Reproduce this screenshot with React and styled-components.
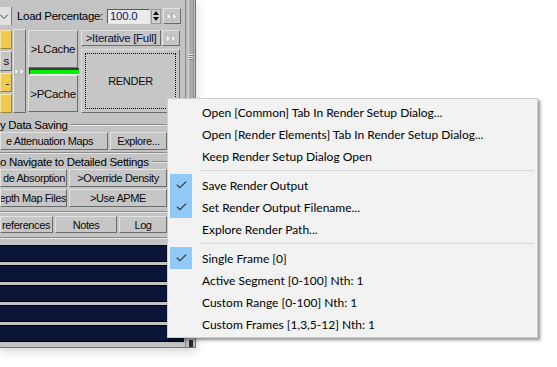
import React from "react";
import styled, { createGlobalStyle } from "styled-components";

const GlobalStyle = createGlobalStyle`
  html, body {
    margin: 0;
    padding: 0;
    background: #fff;
  }
  body {
    font-family: "Liberation Sans", Arial, sans-serif;
  }
`;

const Page = styled.div`
  position: relative;
  width: 557px;
  height: 367px;
  overflow: hidden;
  background: #fff;
`;

const Window = styled.div`
  display: flex;
  width: 195px;
  height: 347px;
  background: #c3c3c3;
  border-right: 1px solid #2b88d8;
  border-bottom: 1px solid #2b88d8;
  box-shadow: 0 3px 10px rgba(0, 0, 0, 0.18);
  font: 11px "Liberation Sans", Arial, sans-serif;
  letter-spacing: -0.3px;
  color: #000;
`;

const Content = styled.div`
  width: 185px;
  display: flex;
  flex-direction: column;
  overflow: hidden;
`;

const ScrollTrack = styled.div`
  width: 9px;
  margin-left: 1px;
  border-left: 1px solid #8c8c8c;
  background: #bdbdbd;
  display: flex;
  flex-direction: column;
  justify-content: space-between;
`;

const Thumb = styled.div`
  margin: 0 1px 0 2px;
  height: 110px;
  background: #ababab;
  border-left: 1px solid #d4d4d4;
  border-right: 1px solid #8e8e8e;
  display: flex;
  align-items: flex-end;
  justify-content: center;
  padding-bottom: 50px;
  box-sizing: border-box;
`;

const Grip = styled.div`
  width: 4px;
  height: 6px;
  background: repeating-linear-gradient(#efefef 0 1px, #7a7a7a 1px 2px);
`;

const ScrollEnd = styled.div`
  height: 7px;
  margin: 0 2px 0 3px;
  background: #2a2a2a;
`;

const TopRow = styled.div`
  height: 26px;
  padding-top: 3px;
  display: flex;
  align-items: center;
`;

const Dropdown = styled.div`
  width: 11px;
  height: 18px;
  background: #e1e1e1;
  border-right: 1px solid #7a7a7a;
  display: flex;
  align-items: center;
`;

const Label = styled.span`
  margin: 0 4px 0 5px;
  font-size: 11.5px;
  white-space: nowrap;
`;

const NumberInput = styled.div`
  width: 39px;
  height: 13px;
  border: 1px solid;
  border-color: #5a5a5a #e8e8e8 #e8e8e8 #5a5a5a;
  background: #ebebeb;
  color: #121270;
  font-size: 11.5px;
  line-height: 13px;
  padding-left: 2px;
  box-sizing: content-box;
`;

const Spinner = styled.div`
  width: 10px;
  height: 15px;
  margin-left: 1px;
  background: #d0d0d0;
  border: 1px solid #9a9a9a;
  box-sizing: border-box;
  display: flex;
  flex-direction: column;
  align-items: center;
  justify-content: space-around;
`;

const Bevel = styled.div`
  box-sizing: border-box;
  background: #c6c6c6;
  border: 1px solid;
  border-color: #e2e2e2 #6c6c6c #6c6c6c #e2e2e2;
  display: flex;
  align-items: center;
  justify-content: center;
  white-space: nowrap;
  overflow: hidden;
  color: #0a0a0a;
`;

const ArrowButton = styled(Bevel)`
  width: 18px;
  height: 16px;
  margin-left: ${(p) => p.$gap || 0}px;
`;

const MainRow = styled.div`
  height: 84px;
  display: flex;
`;

const SwatchColumn = styled.div`
  width: 12px;
  padding-top: 1px;
  display: flex;
  flex-direction: column;
  gap: 2px;
`;

const Swatch = styled(Bevel)`
  height: ${(p) => p.$h}px;
  background: ${(p) => (p.$yellow ? "#f1ca52" : "#c6c6c6")};
  border-color: ${(p) => (p.$yellow ? "#f7e6a4 #9c8440 #9c8440 #f7e6a4" : "#e2e2e2 #6c6c6c #6c6c6c #e2e2e2")};
  justify-content: flex-end;
  padding-right: 2px;
  font-size: 11.5px;
`;

const ArrowStrip = styled(Bevel)`
  width: 13px;
  height: 84px;
  margin-left: 1px;
  background: #c0c0c0;
`;

const CacheColumn = styled.div`
  width: 51px;
  margin-left: 2px;
  padding-top: 1px;
  display: flex;
  flex-direction: column;
`;

const CacheButton = styled(Bevel)`
  width: 50px;
  height: ${(p) => p.$h}px;
  font-size: 11.5px;
`;

const Progress = styled.div`
  height: 7px;
  margin-left: 1px;
  box-sizing: border-box;
  background: #00f000;
  border-top: 2px solid #3a3a3a;
  border-left: 1px solid #3a3a3a;
  border-bottom: 1px solid #f4f4f4;
`;

const RenderColumn = styled.div`
  width: 99px;
  margin-left: 2px;
  padding-top: 1px;
  display: flex;
  flex-direction: column;
  gap: 3px;
`;

const SplitRow = styled.div`
  display: flex;
  gap: 1px;
`;

const WideButton = styled(Bevel)`
  flex: 1;
  height: 16px;
  font-size: 11.5px;
  color: #10103a;
`;

const RenderButton = styled(Bevel)`
  height: 64px;
  padding: 3px;
`;

const FocusRect = styled.div`
  flex: 1;
  align-self: stretch;
  border: 1px dotted #000;
  display: flex;
  align-items: center;
  justify-content: center;
  font-size: 11px;
`;

const GroupHead = styled.div`
  height: 14px;
  margin-top: ${(p) => p.$top || 0}px;
  display: flex;
  align-items: center;
  gap: 3px;
  font-size: 11.5px;
  white-space: nowrap;

  &::after {
    content: "";
    flex: 1;
    height: 0;
    border-top: 1px solid #8a8a8a;
    border-bottom: 1px solid #e6e6e6;
  }
`;

const GroupRule = styled.div`
  margin-top: ${(p) => p.$top || 0}px;
  border-top: 1px solid #8a8a8a;
  border-bottom: 1px solid #e6e6e6;
`;

const ButtonRow = styled.div`
  display: flex;
  gap: 2px;
  height: ${(p) => p.$h}px;
  margin-top: ${(p) => p.$top || 0}px;
  width: 167px;
`;

const RowButton = styled(Bevel)`
  width: ${(p) => p.$w}px;
  flex: ${(p) => (p.$w ? "none" : 1)};
  font-size: 11px;
  letter-spacing: -0.4px;
  justify-content: ${(p) => (p.$pad != null ? "flex-end" : "center")};
  padding-right: ${(p) => p.$pad || 0}px;
`;

const List = styled.div`
  margin-top: 5px;
  display: flex;
  flex-direction: column;
  gap: 3px;
  padding-top: 1px;
`;

const ListBar = styled.div`
  height: 15px;
  background: #0b1537;
  border-top: 1px solid #000;
  border-bottom: 1px solid #000;
`;

const Menu = styled.div`
  position: absolute;
  left: 167px;
  top: 98px;
  width: 371px;
  box-sizing: border-box;
  padding: 2px;
  background: #f2f2f2;
  border: 1px solid #cfcfcf;
  box-shadow: 2px 2px 2px rgba(0, 0, 0, 0.3), 3px 3px 4px rgba(0, 0, 0, 0.15);
  font: 12px Lato, "Noto Sans", sans-serif;
  color: #000;
`;

const Item = styled.div`
  height: 22px;
  display: flex;
  align-items: center;
  white-space: nowrap;
`;

const CheckCell = styled.div`
  width: 22px;
  height: 22px;
  margin-right: 10px;
  display: flex;
  align-items: center;
  justify-content: center;
  background: ${(p) => (p.$on ? "#91c9f7" : "transparent")};
`;

const Separator = styled.div`
  height: 7px;
  margin: 0 1px 0 29px;
  display: flex;
  align-items: center;

  &::before {
    content: "";
    flex: 1;
    border-top: 1px solid #d7d7d7;
  }
`;

const Arrows = () => (
  <svg width="12" height="9" viewBox="0 0 12 9">
    <path d="M1 0.5 L5.5 4.5 L1 8.5 Z M6.5 0.5 L11 4.5 L6.5 8.5 Z" fill="#f2f2f2" stroke="#a9a9a9" strokeWidth="0.8" />
  </svg>
);

const Chevron = () => (
  <svg width="9" height="5" viewBox="0 0 9 5">
    <polyline points="0,0.5 4,4.5 8,0.5" fill="none" stroke="#444" strokeWidth="1" />
  </svg>
);

const Tri = ({ up }) => (
  <svg width="6" height="4" viewBox="0 0 6 4">
    <path d={up ? "M0 4 L3 0 L6 4 Z" : "M0 0 L3 4 L6 0 Z"} fill="#111" />
  </svg>
);

const Check = () => (
  <svg width="11" height="8" viewBox="0 0 11 8">
    <polyline points="0.8,3.6 3.8,6.6 10.2,0.6" fill="none" stroke="#3a3a3a" strokeWidth="1.3" />
  </svg>
);

const menuItems = [
  { label: "Open [Common] Tab In Render Setup Dialog..." },
  { label: "Open [Render Elements] Tab In Render Setup Dialog..." },
  { label: "Keep Render Setup Dialog Open" },
  { sep: true },
  { label: "Save Render Output", checked: true },
  { label: "Set Render Output Filename...", checked: true },
  { label: "Explore Render Path..." },
  { sep: true },
  { label: "Single Frame [0]", checked: true },
  { label: "Active Segment [0-100] Nth: 1" },
  { label: "Custom Range [0-100] Nth: 1" },
  { label: "Custom Frames [1,3,5-12] Nth: 1" },
];

export default function App() {
  return (
    <Page>
      <GlobalStyle />
      <Window>
        <Content>
          <TopRow>
            <Dropdown>
              <Chevron />
            </Dropdown>
            <Label>Load Percentage:</Label>
            <NumberInput>100.0</NumberInput>
            <Spinner>
              <Tri up />
              <Tri />
            </Spinner>
            <ArrowButton $gap={2}>
              <Arrows />
            </ArrowButton>
          </TopRow>

          <MainRow>
            <SwatchColumn>
              <Swatch $yellow $h={19} />
              <Swatch $h={20}>s</Swatch>
              <Swatch $yellow $h={19}>-</Swatch>
              <Swatch $yellow $h={19} />
            </SwatchColumn>
            <ArrowStrip>
              <Arrows />
            </ArrowStrip>
            <CacheColumn>
              <CacheButton $h={38}>&gt;LCache</CacheButton>
              <Progress />
              <CacheButton $h={37}>&gt;PCache</CacheButton>
            </CacheColumn>
            <RenderColumn>
              <SplitRow>
                <WideButton>&gt;Iterative [Full]</WideButton>
                <ArrowButton>
                  <Arrows />
                </ArrowButton>
              </SplitRow>
              <RenderButton>
                <FocusRect>RENDER</FocusRect>
              </RenderButton>
            </RenderColumn>
          </MainRow>

          <GroupHead $top={5}>y Data Saving</GroupHead>
          <ButtonRow $h={18}>
            <RowButton $w={108} $pad={14}>e Attenuation Maps</RowButton>
            <RowButton>Explore...</RowButton>
          </ButtonRow>
          <GroupRule $top={2} />
          <GroupHead $top={1}>o Navigate to Detailed Settings</GroupHead>
          <ButtonRow $h={18}>
            <RowButton $w={67} $pad={1}>de Absorption</RowButton>
            <RowButton>&gt;Override Density</RowButton>
          </ButtonRow>
          <ButtonRow $h={18} $top={2}>
            <RowButton $w={67} $pad={0}>epth Map Files</RowButton>
            <RowButton>&gt;Use APME</RowButton>
          </ButtonRow>
          <GroupRule $top={4} />
          <ButtonRow $h={17} $top={3}>
            <RowButton $w={53} $pad={2}>references</RowButton>
            <RowButton $w={62}>Notes</RowButton>
            <RowButton>Log</RowButton>
          </ButtonRow>
          <GroupRule $top={4} />
          <List>
            {[0, 1, 2, 3, 4].map((i) => (
              <ListBar key={i} />
            ))}
          </List>
        </Content>
        <ScrollTrack>
          <Thumb>
            <Grip />
          </Thumb>
          <ScrollEnd />
        </ScrollTrack>
      </Window>

      <Menu>
        {menuItems.map((m, i) =>
          m.sep ? (
            <Separator key={i} />
          ) : (
            <Item key={i}>
              <CheckCell $on={m.checked}>{m.checked && <Check />}</CheckCell>
              {m.label}
            </Item>
          )
        )}
      </Menu>
    </Page>
  );
}
